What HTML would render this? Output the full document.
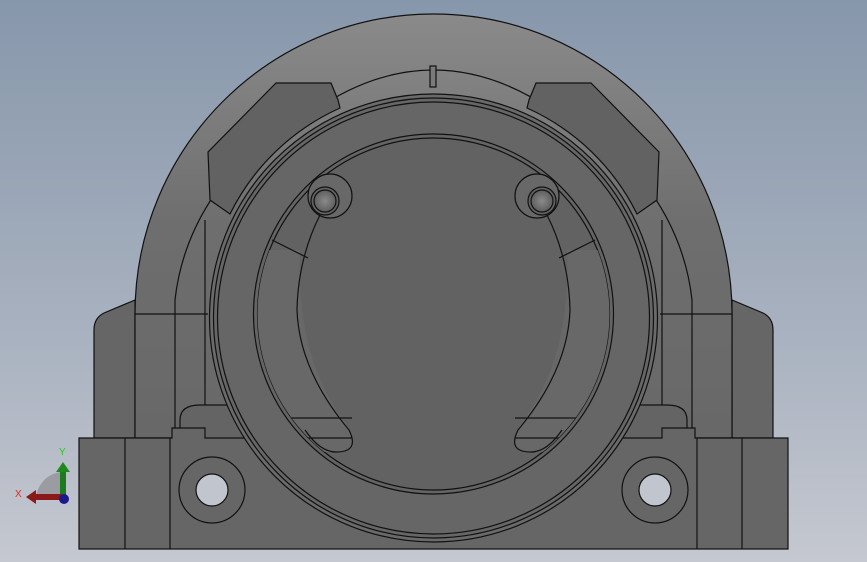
<!DOCTYPE html>
<html><head><style>
html,body{margin:0;padding:0;width:867px;height:562px;overflow:hidden}
svg{display:block}
</style></head><body>
<svg width="867" height="562" viewBox="0 0 867 562" xmlns="http://www.w3.org/2000/svg">
<defs>
<linearGradient id="bg" x1="0" y1="0" x2="0" y2="1">
<stop offset="0" stop-color="#8797ab"/><stop offset="0.6" stop-color="#a9b2c0"/><stop offset="1" stop-color="#c5c8d0"/>
</linearGradient>
<linearGradient id="dome" x1="0" y1="0" x2="0" y2="1">
<stop offset="0" stop-color="#8a8a8a"/><stop offset="0.5" stop-color="#6e6e6e"/><stop offset="1" stop-color="#686868"/>
</linearGradient>
<radialGradient id="bolt" cx="0.5" cy="0.5" r="0.5">
<stop offset="0" stop-color="#8a8a8a"/><stop offset="1" stop-color="#5e5e5e"/>
</radialGradient>
<clipPath id="inner"><circle cx="433.5" cy="314" r="176"/></clipPath>
</defs>
<rect width="867" height="562" fill="url(#bg)"/>
<g stroke="#111" stroke-width="1.2" fill="none">
<path d="M94,330 Q94,318 104,313 L135,300 L135,438 L94,438 Z" fill="#666"/>
<path d="M773,330 Q773,318 763,313 L732,300 L732,438 L773,438 Z" fill="#666"/>
<!-- dome -->
<path d="M135,314 C135,148 269,14 433.5,14 C598,14 732,148 732,314 L732,438 L135,438 Z" fill="url(#dome)"/>
<path d="M175,438 L175,300 A258,240 0 0 1 315,110" />
<path d="M692,438 L692,300 A258,240 0 0 0 552,110" />
<path d="M315,110 Q433.5,30 552,110"/>
<line x1="135" y1="314" x2="208" y2="314"/><line x1="660" y1="314" x2="732" y2="314"/>
<path d="M205,438 L205,220"/><path d="M662,438 L662,220"/>
<!-- pads -->
<path d="M276,83 L331,83 L338,100 L340,108 A226,226 0 0 0 230,214 L210,200 L208,152 Z" fill="#626262"/>
<path d="M591,83 L536,83 L529,100 L527,108 A226,226 0 0 1 637,214 L657,200 L659,152 Z" fill="#626262"/>
<rect x="430" y="66" width="6" height="21" fill="#7a7a7a"/>
<!-- lower pockets -->
<path d="M180,438 L180,420 Q180,405 200,405 L300,405 L300,438" fill="#646464"/>
<path d="M687,438 L687,420 Q687,405 667,405 L567,405 L567,438" fill="#646464"/>
<!-- base -->
<path d="M79,438 L172,438 L172,428 L205,428 L205,438 L662,438 L662,428 L695,428 L695,438 L788,438 L788,549 L79,549 Z" fill="#666"/>
<line x1="125" y1="438" x2="125" y2="549"/><line x1="170" y1="438" x2="170" y2="549"/>
<line x1="697" y1="438" x2="697" y2="549"/><line x1="742" y1="438" x2="742" y2="549"/>
<circle cx="212" cy="490" r="33"/>
<circle cx="212" cy="490" r="16" fill="#c1c5cd"/>
<circle cx="655" cy="490" r="33"/>
<circle cx="655" cy="490" r="16" fill="#c1c5cd"/>
<!-- cap outer ring -->
<circle cx="433.5" cy="318" r="224" fill="#6a6a6a"/>
<circle cx="433.5" cy="318" r="220" fill="#666"/>
<circle cx="433.5" cy="318" r="216"/>
<!-- inner ring -->
<circle cx="433.5" cy="314" r="180" fill="#646464"/>
<circle cx="433.5" cy="314" r="176" fill="#626262"/>
<g clip-path="url(#inner)">
<path d="M250,250 L300,250 Q295,360 349,428 Q358,452 335,452 L250,452 Z" fill="#686868" stroke="none"/>
<path d="M617,250 L567,250 Q572,360 518,428 Q509,452 532,452 L617,452 Z" fill="#686868" stroke="none"/>
<line x1="250" y1="418" x2="352" y2="418"/><line x1="250" y1="438" x2="352" y2="438"/>
<line x1="515" y1="418" x2="617" y2="418"/><line x1="515" y1="438" x2="617" y2="438"/>
</g>
<path d="M320,215 A136,180 0 0 0 297,310 Q299,370 349,430 Q360,452 336,452 Q320,452 305,430" />
<path d="M547,215 A136,180 0 0 1 570,310 Q568,370 518,430 Q507,452 531,452 Q547,452 562,430" />
<line x1="272" y1="240" x2="308" y2="258"/><line x1="595" y1="240" x2="559" y2="258"/>
<!-- bolt counterbores -->
<circle cx="330" cy="196" r="22" fill="#686868"/>
<circle cx="325" cy="201" r="14" fill="url(#bolt)"/>
<circle cx="325" cy="201" r="11" fill="url(#bolt)"/>
<circle cx="537" cy="196" r="22" fill="#686868"/>
<circle cx="542" cy="201" r="14" fill="url(#bolt)"/>
<circle cx="542" cy="201" r="11" fill="url(#bolt)"/>
</g>
<path d="M36,500 A28,28 0 0 1 62,472 L62,500 Z" fill="#9a9ca2"/>
<rect x="60" y="470" width="6" height="30" fill="#1e7a1e"/>
<path d="M56,472 L63,462 L70,472 Z" fill="#1e8a1e"/>
<rect x="34" y="494" width="28" height="6" fill="#8a1a1a"/>
<path d="M36,490 L26,497 L36,504 Z" fill="#8a1a1a"/>
<circle cx="64" cy="499" r="5" fill="#1a1a8a"/>
<text x="59" y="455" font-family="Liberation Sans,sans-serif" font-size="10" fill="#2c2">Y</text>
<text x="15" y="497" font-family="Liberation Sans,sans-serif" font-size="10" fill="#e22">X</text>
</svg>
</body></html>
